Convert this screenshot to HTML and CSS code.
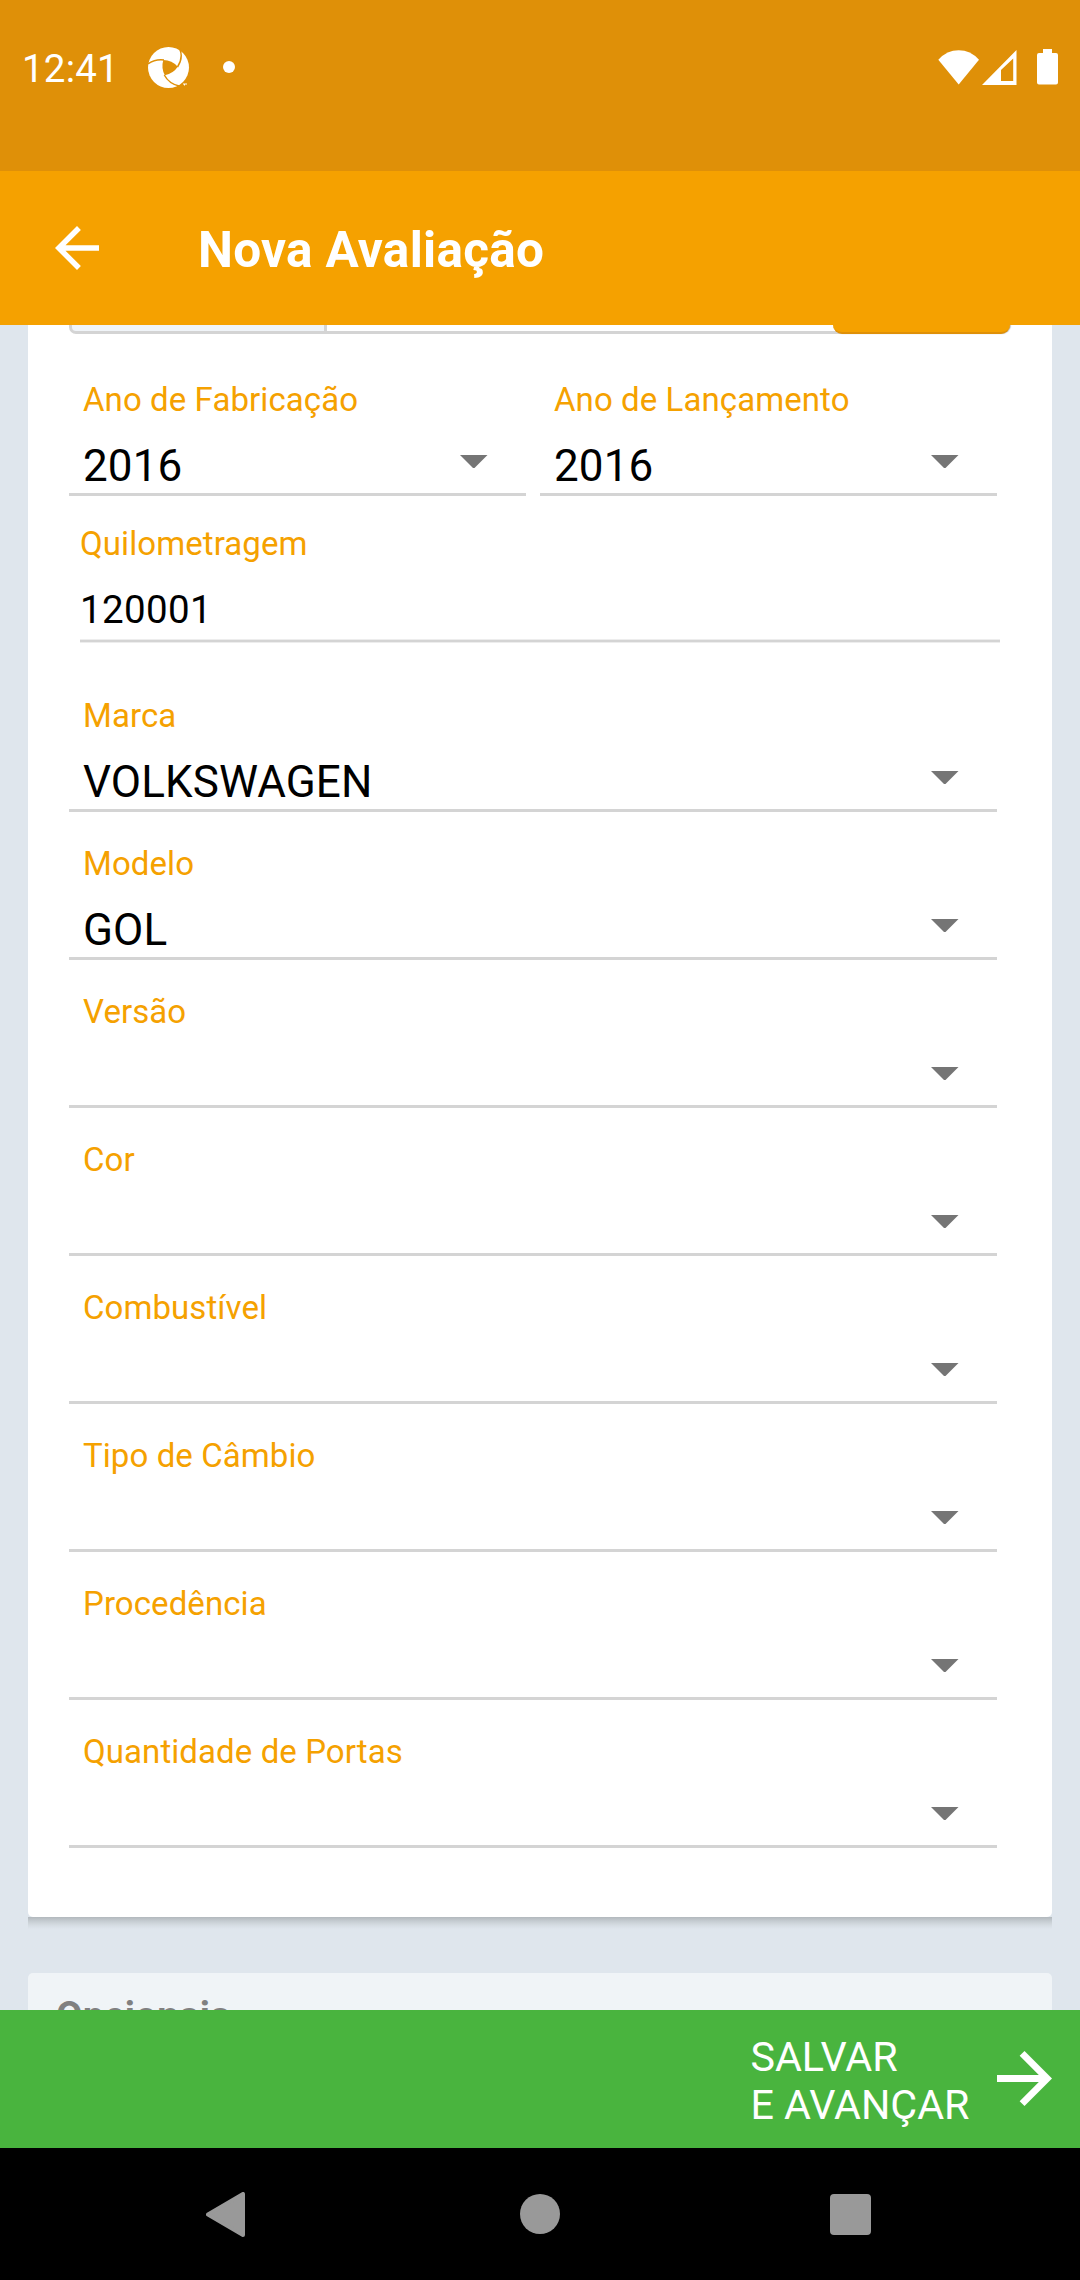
FILE: index.html
```html
<!DOCTYPE html>
<html lang="pt-BR">
<head>
<meta charset="utf-8">
<title>Nova Avaliação</title>
<link rel="stylesheet" href="styles.css">
</head>
<body>
<div class="screen">
  <div class="status-bar">
    <span class="clock">12:41</span>
    <svg class="logo" viewBox="0 0 42 42">
      <circle cx="20.500" cy="20.500" r="20.500" fill="#fff"/>
      <path d="M15.300 13Q24 13 29.800 19.800Q25.500 26.300 16.800 28.300Q13 21 15.300 13Z" fill="#df9008"/>
      <path d="M0 16.800Q7 12 16 13M31.800 2Q35.500 11 29.500 20M16.300 28Q21 37 32 39.300" fill="none" stroke="#df9008" stroke-width="1.500"/>
      <path d="M35 37h4M36.500 37v1.500" stroke="#fff" stroke-width="1"/>
    </svg>
    <span class="dot"></span>
    <div class="status-icons">
      <svg class="wifi" viewBox="0 0 42 35"><path d="M0.300 9.700Q9 0.300 20.700 0.300T41 9.700L20.700 34.500Z" fill="#fff"/></svg>
      <svg class="signal" viewBox="0 0 35 35"><path fill-rule="evenodd" d="M0 35L34.500 0V35ZM19 20V31H31.200V8.500Z" fill="#fff"/></svg>
      <svg class="battery" viewBox="0 0 21 36"><path d="M6 0h9v4h4q2 0 2 2v27.500q0 2-2 2H2q-2 0-2-2V6q0-2 2-2h4Z" fill="#fff"/></svg>
    </div>
  </div>
  <header class="app-bar">
    <svg class="back" viewBox="0 0 16 16"><path d="M16 7H3.830l5.590-5.590L8 0 0 8l8 8 1.410-1.410L3.830 9H16V7z" fill="#fff"/></svg>
    <h1>Nova Avaliação</h1>
  </header>
  <main class="content">
    <section class="card">
      <div class="input-group">
        <span class="group-label"></span>
        <span class="group-input"></span>
        <span class="group-button"></span>
      </div>
      <div class="row">
        <div class="field"><label>Ano de Fabricação</label><div class="value">2016<svg class="caret" viewBox="0 0 28 14"><path d="M0 0h28L14 14z"/></svg></div></div>
        <div class="field"><label>Ano de Lançamento</label><div class="value">2016<svg class="caret" viewBox="0 0 28 14"><path d="M0 0h28L14 14z"/></svg></div></div>
      </div>
      <div class="text-field"><label>Quilometragem</label><div class="text-value">120001</div></div>
      <div class="field"><label>Marca</label><div class="value">VOLKSWAGEN<svg class="caret" viewBox="0 0 28 14"><path d="M0 0h28L14 14z"/></svg></div></div>
      <div class="field"><label>Modelo</label><div class="value">GOL<svg class="caret" viewBox="0 0 28 14"><path d="M0 0h28L14 14z"/></svg></div></div>
      <div class="field"><label>Versão</label><div class="value"><svg class="caret" viewBox="0 0 28 14"><path d="M0 0h28L14 14z"/></svg></div></div>
      <div class="field"><label>Cor</label><div class="value"><svg class="caret" viewBox="0 0 28 14"><path d="M0 0h28L14 14z"/></svg></div></div>
      <div class="field"><label>Combustível</label><div class="value"><svg class="caret" viewBox="0 0 28 14"><path d="M0 0h28L14 14z"/></svg></div></div>
      <div class="field"><label>Tipo de Câmbio</label><div class="value"><svg class="caret" viewBox="0 0 28 14"><path d="M0 0h28L14 14z"/></svg></div></div>
      <div class="field"><label>Procedência</label><div class="value"><svg class="caret" viewBox="0 0 28 14"><path d="M0 0h28L14 14z"/></svg></div></div>
      <div class="field"><label>Quantidade de Portas</label><div class="value"><svg class="caret" viewBox="0 0 28 14"><path d="M0 0h28L14 14z"/></svg></div></div>
    </section>
    <div class="card-shadow"></div>
    <section class="next-card"><h2>Opcionais</h2></section>
  </main>
  <div class="save-bar">
    <span class="save-label">SALVAR<br>E AVANÇAR</span>
    <svg class="forward" viewBox="0 0 16 16"><path d="M8 0L6.590 1.410 12.170 7H0v2h12.170l-5.580 5.590L8 16l8-8z" fill="#fff"/></svg>
  </div>
  <nav class="nav-bar">
    <svg class="nav-back" viewBox="0 0 39 45"><path d="M37 2v41L2 22.500Z" fill="#999" stroke="#999" stroke-width="4" stroke-linejoin="round"/></svg>
    <span class="nav-home"></span>
    <span class="nav-recent"></span>
  </nav>
</div>
</body>
</html>
```

FILE: styles.css
```css
* { box-sizing: border-box; }
body { margin: 0; font-family: Roboto, sans-serif; }
.screen { width: 1080px; height: 2280px; display: flex; flex-direction: column; overflow: hidden; background: #dfe6ed; }

.status-bar { height: 171px; flex: none; background: #df9008; color: #fff; display: flex; align-items: flex-start; padding: 47px 22px 0 22px; }
.clock { width: 126px; margin-top: -1px; font-size: 38.5px; line-height: 46px; letter-spacing: 0.2px; }
.logo { width: 42px; height: 42px; }
.dot { width: 12px; height: 12px; border-radius: 50%; background: #fff; margin: 14px 0 0 33px; }
.status-icons { margin-left: auto; display: flex; align-items: flex-start; }
.wifi { width: 42px; height: 35px; margin-top: 3px; }
.signal { width: 35px; height: 35px; margin: 3px 0 0 2px; }
.battery { width: 21px; height: 36px; margin: 2px 0 0 20px; }

.app-bar { height: 154px; flex: none; background: #f5a100; color: #fff; display: flex; align-items: center; padding-left: 55px; }
.back { width: 44px; height: 44px; }
h1 { margin: 3px 0 0 99px; font-size: 49.5px; line-height: 58px; font-weight: 700; letter-spacing: 0.3px; }

.content { height: 1685px; flex: none; overflow: hidden; padding: 0 28px; }
.card { height: 1592px; background: #fff; border-radius: 0 0 5px 5px; padding: 0 55px 0 41px; }
.input-group { height: 9px; display: flex; margin: 0 -13px 14px 0; }
.group-label { width: 255px; background: #f0f4f8; border: solid #d4d4d4; border-width: 0 0 3px 3px; border-radius: 0 0 0 7px; }
.group-input { flex: 1; border: solid #d4d4d4; border-width: 0 0 3px 3px; margin-right: -10px; }
.group-button { width: 177px; background: #f5a100; border-bottom: 2px solid #df9008; border-radius: 0 0 12px 12px; box-shadow: 1px 0 1px #bbb; }
.row { display: grid; grid-template-columns: 457px 457px; gap: 14px; }
label { display: block; font-size: 33px; line-height: 40px; letter-spacing: 0.08px; color: #f5a100; }
.field { height: 148px; padding: 32px 0 0 14px; border-bottom: 3px solid #d4d4d4; }
.value { margin-top: 20px; height: 52px; display: flex; align-items: flex-start; font-size: 44px; line-height: 52px; letter-spacing: 0.1px; color: #000; padding-right: 38.5px; }
.caret { width: 27.5px; height: 13.75px; margin: 14.5px 0 0 auto; fill: #757575; }
.text-field { height: 146px; margin: 0 -3px 22px 11px; padding-top: 28px; border-bottom: 2px solid #d4d4d4; box-shadow: 0 1px #ededed, inset 0 -1px #ededed; }
.text-value { margin-top: 23px; font-size: 38.5px; line-height: 46px; letter-spacing: 0.35px; color: #000; }
.card-shadow { height: 12px; margin-bottom: 44px; background: linear-gradient(#b2b8bd, #c6cdd2 35%, #d6dde3 70%, #dfe6ed); }
.next-card { height: 90px; background: #f0f4f7; border-radius: 5px 5px 0 0; padding: 20px 28px; }
h2 { margin: 0; font-size: 38.5px; line-height: 46px; font-weight: 700; letter-spacing: 0.2px; color: #808080; }

.save-bar { height: 138px; flex: none; background: #49b43e; color: #fff; display: flex; align-items: center; justify-content: flex-end; padding-right: 28px; font-size: 41.25px; line-height: 48px; }
.save-label { margin-top: 3px; }
.forward { width: 55px; height: 55px; margin: 0 0 1px 27.5px; }

.nav-bar { flex: 1; background: #000; display: flex; align-items: flex-start; }
.nav-back { width: 39px; height: 45px; margin: 44px 0 0 206px; }
.nav-home { width: 40px; height: 40px; border-radius: 50%; background: #999; margin: 46px 0 0 275px; }
.nav-recent { width: 41px; height: 41px; border-radius: 4px; background: #999; margin: 46px 0 0 270px; }
```
